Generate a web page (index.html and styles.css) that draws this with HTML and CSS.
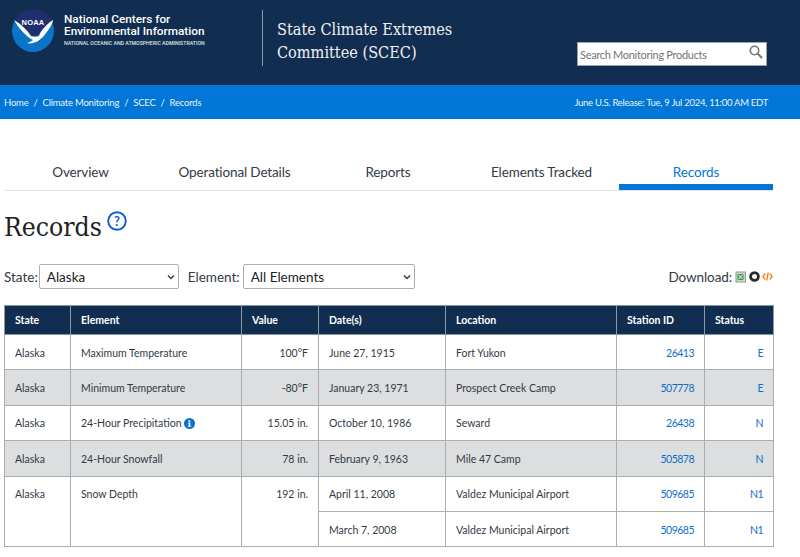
FILE: index.html
```html
<!DOCTYPE html>
<html lang="en">
<head>
<meta charset="utf-8">
<title>Records</title>
<link rel="stylesheet" href="styles.css">
</head>
<body>
<header class="masthead">
  <div class="brand">
    <svg class="logo" width="42" height="42" viewBox="0 0 42 42">
      <circle cx="21" cy="21" r="21" fill="#0a74c9"/>
      <path d="M2 11A21 21 0 0 1 40 11C37 14 31 18 27 25 L20 27C16 21 9 15 2 11Z" fill="#1f2f6e"/>
      <path d="M2 10C9 14 15 20 19 26C22 27 25 27 27 26C29 20 35 14 41 10C41 13 38 18 34 23C32 26 29 29 26 31C22 33 18 34 15 33C18 32 20 31 21 30C15 27 7 19 2 10Z" fill="#fff"/>
      <text class="logo-text" x="21" y="14.5" text-anchor="middle">NOAA</text>
    </svg>
    <div class="brand-text">
      <div class="brand-name">National Centers for<br>Environmental Information</div>
      <div class="brand-sub">NATIONAL OCEANIC AND ATMOSPHERIC ADMINISTRATION</div>
    </div>
  </div>
  <div class="site-title">State Climate Extremes<br>Committee (SCEC)</div>
  <div class="search">
    <span class="search-text">Search Monitoring Products</span>
    <svg width="14" height="14" viewBox="0 0 14 14" fill="none" stroke="#6d7278" stroke-width="1.6"><circle cx="5.5" cy="5.5" r="4.2"/><path d="M8.6 8.6L13 13" stroke-width="2"/></svg>
  </div>
</header>
<nav class="bar">
  <div class="crumbs"><a>Home</a><span>/</span><a>Climate Monitoring</a><span>/</span><a>SCEC</a><span>/</span><a>Records</a></div>
  <div class="release">June U.S. Release: Tue, 9 Jul 2024, 11:00 AM EDT</div>
</nav>
<main class="content">
  <div class="tabs">
    <div class="tab">Overview</div>
    <div class="tab">Operational Details</div>
    <div class="tab">Reports</div>
    <div class="tab">Elements Tracked</div>
    <div class="tab active">Records</div>
  </div>
  <div class="title-row">
    <h1>Records</h1>
    <svg class="help" width="20" height="20" viewBox="0 0 20 20"><circle cx="10" cy="10" r="8.8" fill="none" stroke="#0b5fd6" stroke-width="1.9"/><text x="10" y="14.5" text-anchor="middle" class="help-q">?</text></svg>
  </div>
  <div class="filters">
    <label class="lbl">State:</label>
    <select class="sel sel-state"><option>Alaska</option></select>
    <label class="lbl lbl-el">Element:</label>
    <select class="sel sel-el"><option>All Elements</option></select>
    <div class="download">
      <span>Download:</span>
      <svg width="12" height="12" viewBox="0 0 12 12"><rect x="1" y="1" width="9.5" height="10" fill="#cfd9cd" stroke="#8d9c8c"/><rect x="2.5" y="3" width="6" height="6" fill="#3f9b4b"/><path d="M3.5 3.8L7.5 8.2M7.5 3.8L3.5 8.2" stroke="#fff" stroke-width="1"/></svg>
      <svg width="11" height="11" viewBox="0 0 11 11"><circle cx="5.5" cy="5.5" r="3.9" fill="none" stroke="#2a2a2a" stroke-width="2.8"/></svg>
      <svg width="11" height="11" viewBox="0 0 11 11" fill="none" stroke="#f07f22" stroke-width="1.3"><path d="M3.2 2.5L.8 5.5L3.2 8.5M7.8 2.5L10.2 5.5L7.8 8.5M6.3 1.5L4.7 9.5"/></svg>
    </div>
  </div>
  <table class="records">
    <colgroup><col class="c1"><col class="c2"><col class="c3"><col class="c4"><col class="c5"><col class="c6"><col class="c7"></colgroup>
    <thead>
      <tr><th>State</th><th>Element</th><th>Value</th><th>Date(s)</th><th>Location</th><th>Station ID</th><th>Status</th></tr>
    </thead>
    <tbody>
      <tr><td>Alaska</td><td>Maximum Temperature</td><td class="r">100°F</td><td>June 27, 1915</td><td>Fort Yukon</td><td class="r link">26413</td><td class="r link">E</td></tr>
      <tr class="alt"><td>Alaska</td><td>Minimum Temperature</td><td class="r">-80°F</td><td>January 23, 1971</td><td>Prospect Creek Camp</td><td class="r link">507778</td><td class="r link">E</td></tr>
      <tr><td>Alaska</td><td>24-Hour Precipitation <svg class="info" width="11" height="11" viewBox="0 0 11 11"><circle cx="5.5" cy="5.5" r="5.5" fill="#0b6fd0"/><path d="M4.4 2.2h1.9v1.5H4.4zM4 4.6h2.3v3.2h.8v1H3.9v-1h.8V5.6H4z" fill="#fff"/></svg></td><td class="r">15.05 in.</td><td>October 10, 1986</td><td>Seward</td><td class="r link">26438</td><td class="r link">N</td></tr>
      <tr class="alt"><td>Alaska</td><td>24-Hour Snowfall</td><td class="r">78 in.</td><td>February 9, 1963</td><td>Mile 47 Camp</td><td class="r link">505878</td><td class="r link">N</td></tr>
      <tr><td rowspan="2" class="top">Alaska</td><td rowspan="2" class="top">Snow Depth</td><td rowspan="2" class="r top">192 in.</td><td>April 11, 2008</td><td>Valdez Municipal Airport</td><td class="r link">509685</td><td class="r link">N1</td></tr>
      <tr><td>March 7, 2008</td><td>Valdez Municipal Airport</td><td class="r link">509685</td><td class="r link">N1</td></tr>
    </tbody>
  </table>
</main>
</body>
</html>
```
FILE: styles.css
```css
* { box-sizing: border-box; }
html, body { margin: 0; padding: 0; }
body { width: 800px; height: 557px; overflow: hidden; background: #fff; font-family: "Lato", "Open Sans", sans-serif; color: #323a45; }
.masthead { height: 85px; background: #112e51; display: flex; align-items: flex-start; color: #fff; }
.brand { display: flex; width: 262px; padding: 10px 0 0 12px; gap: 10px; }
.logo { flex: none; }
.logo-text { font: bold 7.5px "Liberation Sans", sans-serif; fill: #fff; letter-spacing: .2px; }
.brand-name { font: 500 11.8px/11.5px "Roboto", sans-serif; margin-top: 4px; }
.brand-sub { font: 500 5.2px/6px "Roboto", sans-serif; margin-top: 3px; color: #dfe4ea; white-space: nowrap; }
.site-title { margin-top: 10px; height: 56px; border-left: 1px solid #8a97a8; padding: 8px 0 0 14px; width: 314px; font: 400 16.15px/23px "DejaVu Serif Condensed", "DejaVu Serif", serif; color: #f1f1f1; }
.search { margin: 42px 0 0 1px; width: 190px; height: 24px; background: #fff; border: 1px solid #9aa3ae; display: flex; align-items: center; justify-content: space-between; padding: 0 3px 0 2px; }
.search svg { margin-top: -4px; }
.search-text { font-size: 11px; letter-spacing: -.3px; color: #757575; }
.bar { height: 34px; background: #0076d6; color: #e8f3fc; display: flex; align-items: center; justify-content: space-between; padding: 0 32px 0 4px; font-size: 9.5px; }
.crumbs { display: flex; gap: 5px; letter-spacing: -.22px; }
.release { letter-spacing: -.28px; }
.content { padding: 0 27px 0 4px; }
.tabs { margin-top: 35px; display: flex; height: 37px; border-bottom: 1px solid #e4e4e4; font-size: 13.5px; letter-spacing: -.13px; }
.tab { flex: 1 1 0; text-align: center; padding-top: 10px; color: #323a45; }
.tab.active { color: #0076d6; border-bottom: 6px solid #0076d6; flex: 0 0 154px; height: 36px; }
.tabs .tab:nth-child(1) { flex: 0 0 153px; }
.tabs .tab:nth-child(2) { flex: 0 0 155px; }
.tabs .tab:nth-child(3) { flex: 0 0 152px; }
.tabs .tab:nth-child(4) { flex: 0 0 155px; }
.title-row { display: flex; align-items: flex-start; height: 60px; }
h1 { margin: 18px 0 0; font: 400 26.3px/36px "DejaVu Serif Condensed", "DejaVu Serif", serif; color: #212121; }
.help { margin: 20px 0 0 5px; }
.help-q { font: bold 13px "Lato", sans-serif; fill: #0b5fd6; }
.filters { display: flex; align-items: center; height: 25px; margin-top: 13px; font-size: 13.5px; }
.lbl { margin-right: 1px; }
.lbl-el { margin-left: 9px; margin-right: 3px; }
.sel { height: 25px; appearance: none; background: #fff url("data:image/svg+xml,%3Csvg xmlns='http://www.w3.org/2000/svg' width='8' height='6'%3E%3Cpath d='M1 1.5L4 4.5L7 1.5' fill='none' stroke='%23333' stroke-width='1.3'/%3E%3C/svg%3E") no-repeat right 3px center; border: 1px solid #a9aeb1; border-radius: 2px; font: 13.5px "Lato", sans-serif; color: #212121; padding: 0 7px; }
.sel-state { width: 140px; }
.sel-el { width: 172px; }
.download { margin-left: auto; display: flex; align-items: center; gap: 2px; }
.download span { margin-right: 1px; letter-spacing: -.1px; }
.records { margin-top: 16px; width: 769px; table-layout: fixed; border-collapse: collapse; font-size: 10.5px; }
.c1 { width: 66px; } .c2 { width: 171px; } .c3 { width: 77px; } .c4 { width: 127px; } .c5 { width: 171px; } .c6 { width: 88px; } .c7 { width: 69px; }
.records th { background: #112e51; color: #fff; height: 29px; text-align: left; padding: 0 10px; border: 1px solid #8d98a5; font-weight: 700; }
.records td { height: 35.4px; padding: 1px 10px 0; border: 1px solid #a9aeb1; vertical-align: middle; }
.records td.top { vertical-align: top; padding-top: 11px; }
.alt td { background: #dcdee0; }
.r { text-align: right; }
.link { color: #0b6fc9; letter-spacing: -.5px; }
.info { vertical-align: -1.5px; }
```
